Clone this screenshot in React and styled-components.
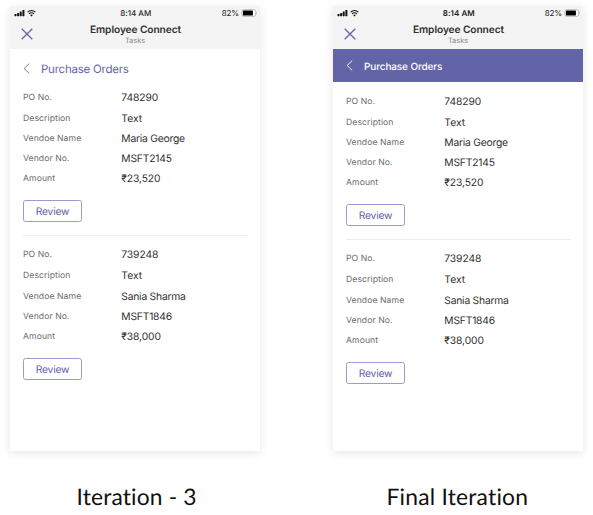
import React from "react";
import styled, { createGlobalStyle, css } from "styled-components";

const GlobalStyle = createGlobalStyle`
  * { box-sizing: border-box; }
  body { margin: 0; background: #fff; overflow: hidden; }
`;

const Page = styled.main`
  display: flex;
  gap: 73px;
  width: 593px;
  height: 515px;
  padding: 6px 10px 0;
  font-family: Inter, "Liberation Sans", sans-serif;
  text-rendering: geometricPrecision;
`;

const Figure = styled.figure`
  display: flex;
  flex-direction: column;
  flex: 0 0 250px;
  margin: 0;
`;

const Phone = styled.section`
  height: 445px;
  background: #fff;
  box-shadow: 0 2px 9px rgba(0, 0, 0, 0.1);
`;

const Caption = styled.figcaption`
  margin-top: 30px;
  padding-left: ${(p) => p.$indent}px;
  font-family: Lato, sans-serif;
  font-size: 22.8px;
  font-variant-ligatures: none;
  line-height: 30px;
  letter-spacing: ${(p) => p.$spacing}px;
  white-space: nowrap;
  color: #111;
`;

const Header = styled.header`
  height: 42.7px;
  background: #f4f4f4;
`;

const StatusBar = styled.div`
  display: grid;
  grid-template-columns: 1fr auto 1fr;
  align-items: center;
  height: 14px;
  padding: 0 2.5px 0 4px;
  font-size: 8px;
  line-height: 14px;
  color: #222;
`;

const Signals = styled.div`
  display: flex;
  gap: 2px;
`;

const Time = styled.span`
  font-weight: ${(p) => (p.$bold ? 600 : 500)};
  letter-spacing: ${(p) => (p.$bold ? 0.04 : -0.05)}px;
`;

const Power = styled.div`
  display: flex;
  align-items: center;
  justify-content: flex-end;
  gap: 1.5px;
  letter-spacing: -0.15px;
`;

const TitleBar = styled.div`
  display: grid;
  grid-template-columns: 34px 1fr 33px;
  height: 28.7px;
`;

const CloseButton = styled.button`
  display: flex;
  padding: 8px 0 0 11px;
  border: 0;
  background: none;
`;

const Titles = styled.div`
  text-align: center;
  white-space: nowrap;
`;

const AppTitle = styled.h1`
  margin: 3px 0 0;
  font-size: 10.2px;
  font-weight: 600;
  line-height: 14px;
  letter-spacing: -0.09px;
  color: #303030;
`;

const Subtitle = styled.p`
  margin: 0;
  padding-right: 1px;
  font-size: 7.4px;
  line-height: 8px;
  letter-spacing: 0;
  color: #858585;
`;

const PageBar = styled.nav`
  display: flex;
  align-items: center;
  gap: 10px;
  padding-left: 13px;
  ${(p) =>
    p.$filled
      ? css`
          height: 33.3px;
          color: #fff;
          background: #6264a7;
        `
      : css`
          height: 29.3px;
          padding-top: 11px;
          color: #6264a7;
        `}
`;

const PageTitle = styled.h2`
  margin: 0;
  padding-top: ${(p) => (p.$small ? 3 : 0)}px;
  font-size: ${(p) => (p.$small ? 10 : 11.5)}px;
  font-weight: ${(p) => (p.$small ? 450 : 430)};
  line-height: 16px;
  letter-spacing: ${(p) => (p.$small ? -0.12 : -0.24)}px;
`;

const Orders = styled.div`
  padding: 9px 13px 0;
`;

const Order = styled.article`
  height: 148.3px;
  border-top: ${(p) => (p.$divided ? "1px solid #ececec" : "0")};
  padding-top: ${(p) => (p.$divided ? "8px" : "0")};
`;

const Fields = styled.dl`
  display: grid;
  grid-template-columns: 98.3px 1fr;
  grid-template-rows: 20.8px 20.8px 20.2px 20px 20px;
  align-items: center;
  margin: 0;
  padding-top: 0.7px;
`;

const Label = styled.dt`
  font-size: 8.6px;
  letter-spacing: 0.09px;
  line-height: 20px;
  color: #6c6c6c;
`;

const Value = styled.dd`
  margin: 0;
  font-size: 10.3px;
  letter-spacing: ${(p) => p.$tracking ?? -0.1}px;
  line-height: 20px;
  color: #303030;
`;

const ReviewButton = styled.button`
  display: block;
  width: 59px;
  height: 22px;
  margin-top: 11px;
  padding: 1px 0 0;
  border: 1px solid #9a9bd0;
  border-radius: 2.5px;
  background: #fff;
  font: 400 10.3px/20px Inter, sans-serif;
  text-rendering: inherit;
  letter-spacing: -0.23px;
  color: #6264a7;
`;

const SignalIcon = () => (
  <svg width="11" height="8" viewBox="0 0 11 8" fill="#111">
    <rect x="0.5" y="5" width="2" height="2.2" rx=".4" />
    <rect x="3.1" y="4" width="2" height="3.2" rx=".4" />
    <rect x="5.7" y="2.5" width="2" height="4.7" rx=".4" />
    <rect x="8.4" y="1" width="2" height="6.2" rx=".4" />
  </svg>
);

const WifiIcon = () => (
  <svg width="9" height="8" viewBox="0 0 9 8" fill="none" stroke="#111" strokeWidth="1.1">
    <path d="M.6 3.2Q4.5-.3 8.4 3.2M2 4.9Q4.5 2.6 7 4.9" />
    <path d="M3.1 6Q4.5 4.9 5.9 6L4.5 7.4Z" fill="#111" stroke="none" />
  </svg>
);

const BatteryIcon = () => (
  <svg width="17" height="8" viewBox="0 0 17 8">
    <rect x=".9" y=".6" width="13.7" height="6.8" rx="1.7" fill="#fff" stroke="#999" strokeWidth=".6" />
    <rect x="1.9" y="1.5" width="10" height="5" rx=".6" fill="#000" />
    <path d="M15.4 2.8Q16.8 4 15.4 5.2Z" fill="#999" />
  </svg>
);

const CloseIcon = () => (
  <svg width="12" height="12" viewBox="0 0 12 12" fill="none" stroke="#6264a7" strokeWidth="1.3">
    <path d="M.7.7 11.3 11.3M11.3.7.7 11.3" />
  </svg>
);

const BackIcon = () => (
  <svg width="8" height="11" viewBox="0 0 8 11" fill="none" stroke="currentColor" strokeWidth=".9">
    <path d="M6.2.6 1.1 5.5 6.2 10.4" />
  </svg>
);

const orders = [
  [
    ["PO No.", "748290"],
    ["Description", "Text", 0],
    ["Vendoe Name", "Maria George", -0.22],
    ["Vendor No.", "MSFT2145", -0.2],
    ["Amount", "₹23,520"],
  ],
  [
    ["PO No.", "739248"],
    ["Description", "Text", 0],
    ["Vendoe Name", "Sania Sharma", -0.22],
    ["Vendor No.", "MSFT1846", -0.2],
    ["Amount", "₹38,000"],
  ],
];

function Screen({ caption, indent, spacing, filled }) {
  return (
    <Figure>
      <Phone>
        <Header>
          <StatusBar>
            <Signals>
              <SignalIcon />
              <WifiIcon />
            </Signals>
            <Time $bold={filled}>8:14 AM</Time>
            <Power>
              <span>82%</span>
              <BatteryIcon />
            </Power>
          </StatusBar>
          <TitleBar>
            <CloseButton aria-label="Close">
              <CloseIcon />
            </CloseButton>
            <Titles>
              <AppTitle>Employee Connect</AppTitle>
              <Subtitle>Tasks</Subtitle>
            </Titles>
          </TitleBar>
        </Header>
        <PageBar $filled={filled}>
          <BackIcon />
          <PageTitle $small={filled}>Purchase Orders</PageTitle>
        </PageBar>
        <Orders>
          {orders.map((fields, i) => (
            <Order key={i} $divided={i > 0}>
              <Fields>
                {fields.map(([label, value, tracking]) => (
                  <React.Fragment key={label}>
                    <Label>{label}</Label>
                    <Value $tracking={tracking}>{value}</Value>
                  </React.Fragment>
                ))}
              </Fields>
              <ReviewButton>Review</ReviewButton>
            </Order>
          ))}
        </Orders>
      </Phone>
      <Caption $indent={indent} $spacing={spacing}>
        {caption}
      </Caption>
    </Figure>
  );
}

export default function App() {
  return (
    <>
      <GlobalStyle />
      <Page>
        <Screen caption="Iteration - 3" indent={66.5} spacing={0.15} />
        <Screen caption="Final Iteration" indent={53.5} spacing={0.22} filled />
      </Page>
    </>
  );
}
